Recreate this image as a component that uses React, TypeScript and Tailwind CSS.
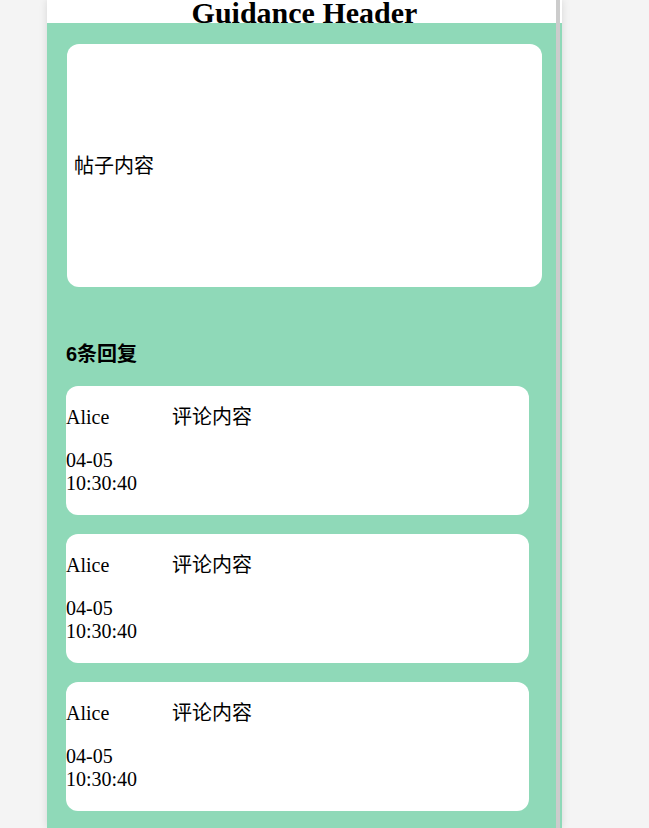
import React from "react";

const serif = "font-['Liberation_Serif','Noto_Sans_CJK_SC',serif]";

// only the first three replies fit in the window
const replies = Array.from({ length: 3 }, () => ({
  user: "Alice",
  time: "04-05 10:30:40",
  text: "评论内容",
}));

function ReplyCard({ user, time, text }: { user: string; time: string; text: string }) {
  return (
    <div className="flex w-[463px] rounded-xl bg-white">
      <div className="w-[106px] shrink-0">
        <p className="my-5 leading-[23px]">{user}</p>
        <p className="my-5 leading-[23px]">{time}</p>
      </div>
      <p className="my-5 leading-[23px]">{text}</p>
    </div>
  );
}

export default function App() {
  return (
    <div className="h-[828px] overflow-hidden bg-[#f4f4f4]">
      <div className={`relative ml-[47px] flex h-full w-[515px] flex-col bg-white text-[20px] text-black shadow-[0_0_8px_rgba(0,0,0,0.12)] ${serif}`}>
        <header className="relative z-10 h-[23px] text-center">
          <h1 className="text-[30px] font-bold leading-[26px]">Guidance Header</h1>
        </header>

        <main className="flex-1 bg-[#8fd9b8] px-5 pt-[21px]">
          <div className="flex h-[243px] items-center rounded-xl bg-white pl-[7px]">
            帖子内容
          </div>

          <h2 className="mt-[56px] mb-5 -ml-px font-['Liberation_Sans','Noto_Sans_CJK_SC',sans-serif] text-[20px] font-bold leading-[23px]">
            6条回复
          </h2>

          <div className="-ml-px flex flex-col gap-[19px]">
            {replies.map((r, i) => (
              <ReplyCard key={i} {...r} />
            ))}
          </div>
        </main>

        <div className="absolute top-0 right-[2px] bottom-0 w-[4px] bg-[#cccccc]" />
      </div>
    </div>
  );
}
